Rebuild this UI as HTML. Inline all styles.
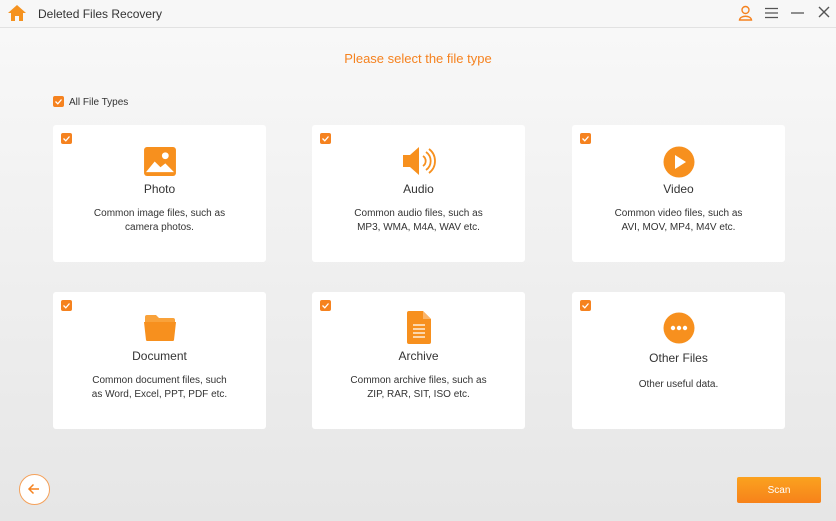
<!DOCTYPE html>
<html><head><style>
*{margin:0;padding:0;box-sizing:border-box}
body{width:836px;height:521px;overflow:hidden;font-family:"Liberation Sans",sans-serif;background:linear-gradient(#f9f9f9,#e6e6e6);position:relative;color:#333}
.top{position:absolute;left:0;top:0;width:836px;height:28px;background:#f7f7f7;border-bottom:1px solid #e2e2e2}
.abs{position:absolute}
.cb{position:absolute;width:11px;height:11px;background:#f5821f;border-radius:2px}
.cb svg{position:absolute;left:1px;top:1px}
.card{position:absolute;width:213px;height:137px;background:#fff;border-radius:3px}
.card .cb{left:8px;top:8px}
.t{position:absolute;left:0;width:100%;text-align:center;font-size:12px;color:#333}
.d{position:absolute;left:0;width:100%;text-align:center;font-size:10px;line-height:14px;color:#333}
.ic{position:absolute;left:50%;transform:translateX(-50%)}
</style></head><body>
<div class="top"></div>
<svg class="abs" style="left:7px;top:4px" width="20" height="18" viewBox="0 0 20 18"><path d="M10 1 L1 9 H4 V17 H8 V12 H12 V17 H16 V9 H19 Z" fill="#f5921f"/></svg>
<div class="abs" style="left:38px;top:7px;font-size:12px;color:#333">Deleted Files Recovery</div>
<svg class="abs" style="left:738px;top:5px" width="15" height="16" viewBox="0 0 15 16"><circle cx="7.5" cy="5" r="3.5" fill="none" stroke="#f5821f" stroke-width="1.4"/><path d="M1.5 15 C2 10 13 10 13.5 15 Z" fill="none" stroke="#f5821f" stroke-width="1.4"/></svg>
<svg class="abs" style="left:765px;top:7px" width="13" height="12"><path d="M0 1.5H13M0 6H13M0 10.5H13" stroke="#555" stroke-width="1.3"/></svg>
<svg class="abs" style="left:791px;top:7px" width="13" height="12"><path d="M0 6H13" stroke="#555" stroke-width="1.3"/></svg>
<svg class="abs" style="left:818px;top:6px" width="12" height="12"><path d="M1 1L11 11M11 1L1 11" stroke="#555" stroke-width="1.4"/></svg>
<div class="abs" style="left:0;width:836px;top:51px;text-align:center;font-size:13px;color:#f5821f">Please select the file type</div>
<div class="cb" style="left:53px;top:96px"><svg width="9" height="9"><path d="M1.5 4.5L3.8 6.8L7.5 2.5" stroke="#fff" stroke-width="1.3" fill="none"/></svg></div>
<div class="abs" style="left:69px;top:97px;font-size:10px">All File Types</div>

<div class="card" style="left:53px;top:125px">
<div class="cb"><svg width="9" height="9"><path d="M1.5 4.5L3.8 6.8L7.5 2.5" stroke="#fff" stroke-width="1.3" fill="none"/></svg></div>
<svg class="ic" style="top:22px" width="32" height="29" viewBox="0 0 33 30"><rect x="0" y="0" width="33" height="30" rx="3" fill="#f7901e"/><circle cx="22" cy="9" r="3.5" fill="#fff"/><path d="M2 26 L11 15 L17 21 L22 17 L31 26 Z" fill="#fff"/></svg>
<div class="t" style="top:57px">Photo</div>
<div class="d" style="top:82px">Common image files, such as<br>camera photos.</div>
</div>
<div class="card" style="left:312px;top:125px">
<div class="cb"><svg width="9" height="9"><path d="M1.5 4.5L3.8 6.8L7.5 2.5" stroke="#fff" stroke-width="1.3" fill="none"/></svg></div>
<svg class="ic" style="top:20px" width="34" height="32" viewBox="0 0 34 32"><path d="M1 10H8L17 2V30L8 22H1Z" fill="#f7901e"/><path d="M21 11A6 6 0 0 1 21 21M24 7A11 11 0 0 1 24 25M27 4A15 15 0 0 1 27 28" stroke="#f7901e" stroke-width="1.8" fill="none"/></svg>
<div class="t" style="top:57px">Audio</div>
<div class="d" style="top:82px">Common audio files, such as<br>MP3, WMA, M4A, WAV etc.</div>
</div>
<div class="card" style="left:572px;top:125px">
<div class="cb"><svg width="9" height="9"><path d="M1.5 4.5L3.8 6.8L7.5 2.5" stroke="#fff" stroke-width="1.3" fill="none"/></svg></div>
<svg class="ic" style="top:21px" width="32" height="32" viewBox="0 0 32 32"><circle cx="16" cy="16" r="15.5" fill="#f7901e"/><path d="M12 9V23L23 16Z" fill="#fff"/></svg>
<div class="t" style="top:57px">Video</div>
<div class="d" style="top:82px">Common video files, such as<br>AVI, MOV, MP4, M4V etc.</div>
</div>

<div class="card" style="left:53px;top:292px">
<div class="cb"><svg width="9" height="9"><path d="M1.5 4.5L3.8 6.8L7.5 2.5" stroke="#fff" stroke-width="1.3" fill="none"/></svg></div>
<svg class="ic" style="top:22px" width="32" height="28" viewBox="0 0 32 28"><path d="M1 3Q1 1 3 1H12L15 4H29Q31 4 31 6V8H1Z" fill="#f9a23a"/><path d="M0 8H32L30 26Q30 27 28 27H4Q2 27 2 26Z" fill="#f7901e"/></svg>
<div class="t" style="top:57px">Document</div>
<div class="d" style="top:82px">Common document files, such<br>as Word, Excel, PPT, PDF etc.</div>
</div>
<div class="card" style="left:312px;top:292px">
<div class="cb"><svg width="9" height="9"><path d="M1.5 4.5L3.8 6.8L7.5 2.5" stroke="#fff" stroke-width="1.3" fill="none"/></svg></div>
<svg class="ic" style="top:19px" width="24" height="33" viewBox="0 0 24 33"><path d="M2 0H16L24 8V31Q24 33 22 33H2Q0 33 0 31V2Q0 0 2 0Z" fill="#f7901e"/><path d="M16 0V8H24Z" fill="#fbb56a"/><path d="M6 14H18M6 18H18M6 22H18M6 26H18" stroke="#fff" stroke-width="1.2"/></svg>
<div class="t" style="top:57px">Archive</div>
<div class="d" style="top:82px">Common archive files, such as<br>ZIP, RAR, SIT, ISO etc.</div>
</div>
<div class="card" style="left:572px;top:292px">
<div class="cb"><svg width="9" height="9"><path d="M1.5 4.5L3.8 6.8L7.5 2.5" stroke="#fff" stroke-width="1.3" fill="none"/></svg></div>
<svg class="ic" style="top:20px" width="32" height="32" viewBox="0 0 32 32"><circle cx="16" cy="16" r="15.5" fill="#f7901e"/><circle cx="10" cy="16" r="2.2" fill="#fff"/><circle cx="16" cy="16" r="2.2" fill="#fff"/><circle cx="22" cy="16" r="2.2" fill="#fff"/></svg>
<div class="t" style="top:59px">Other Files</div>
<div class="d" style="top:86px">Other useful data.</div>
</div>

<div class="abs" style="left:19px;top:474px;width:31px;height:31px;border:1.5px solid #f5a15a;border-radius:50%;background:#fff"></div>
<svg class="abs" style="left:27px;top:482px" width="14" height="14"><path d="M12 7H2M6.5 2.5L2 7L6.5 11.5" stroke="#f5821f" stroke-width="1.5" fill="none"/></svg>
<div class="abs" style="left:737px;top:477px;width:84px;height:26px;background:linear-gradient(#fba21f,#f7821a);border-radius:2px;color:#fff;font-size:10px;text-align:center;line-height:26px;padding-top:1px">Scan</div>
</body></html>
